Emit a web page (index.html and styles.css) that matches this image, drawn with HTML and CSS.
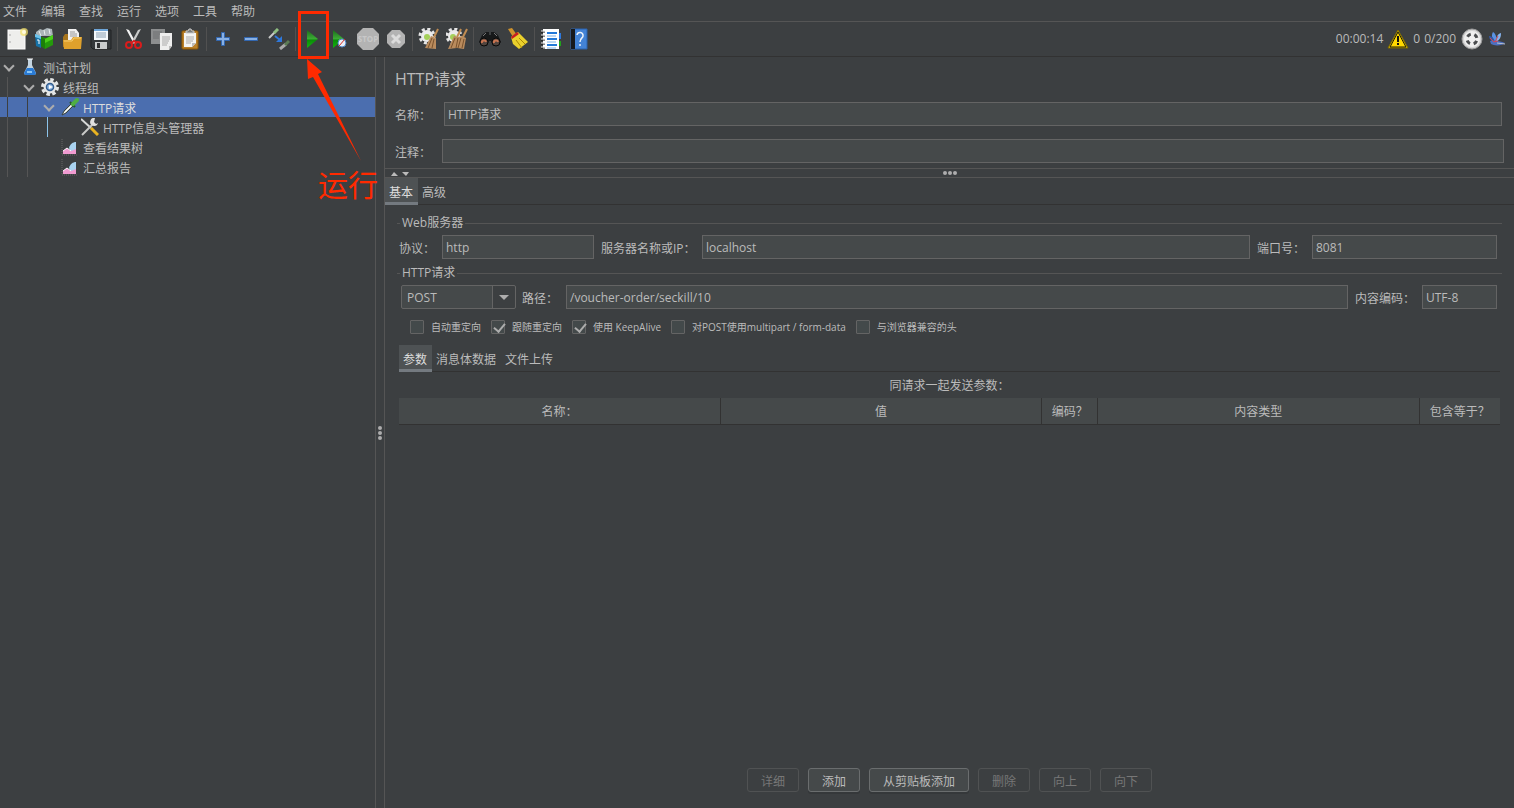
FILE: index.html
```html
<!DOCTYPE html>
<html lang="zh-CN">
<head>
    <meta charset="UTF-8">
    <meta name="viewport" content="width=device-width, initial-scale=1.0">
    <title>Apache JMeter</title>
    <link rel="stylesheet" href="styles.css">
</head>
<body>
    <nav class="menubar">
        <button>文件</button>
        <button>编辑</button>
        <button>查找</button>
        <button>运行</button>
        <button>选项</button>
        <button>工具</button>
        <button>帮助</button>
    </nav>

    <div class="toolbar">
        <button aria-label="新建"><svg width="22" height="22" viewBox="0 0 22 22"><rect x="2" y="2" width="17" height="19" fill="#eeeeec" stroke="#fff"/><path d="M4 6v2M4 13v2" stroke="#aaa" fill="none"/><circle cx="18" cy="4" r="4" fill="#f5e36a" opacity=".7"/><circle cx="18" cy="4" r="2" fill="#fffbe0"/></svg></button>
        <button aria-label="模板"><svg width="22" height="22" viewBox="0 0 22 22"><path d="M2 4l4-3 3 1 4-2 5 1 1 7H2z" fill="#aab4b8"/><path d="M5 3l2 5M10 2l1 5M15 1l1 5" stroke="#e8eeee"/><path d="M1 6l6 3v11l-5-2z" fill="#1672a8"/><path d="M1 6l6 2v3l-6-2z" fill="#6cc3ec"/><path d="M7 9l5 1 7-3v10l-8 4-4-3z" fill="#249a0b"/><path d="M7 9l4 2v10l-4-3z" fill="#1c7f08"/><path d="M11 11l8-4v4l-8 4z" fill="#49cf18"/><path d="M3 12h2v4" stroke="#fff" fill="none"/></svg></button>
        <button aria-label="打开"><svg width="22" height="22" viewBox="0 0 22 22"><path d="M1 9l2-3h5l1 3h9v10H1z" fill="#a6741c"/><path d="M6 1h8l3 4v8H6z" fill="#f1f1f1"/><path d="M8 4h5M8 6h7M8 8h7" stroke="#999"/><path d="M1 12h8l2-3h9l-1 12H2z" fill="#dfa12c"/><path d="M2 13h8l2-3h7" stroke="#f7ce70" fill="none"/></svg></button>
        <button aria-label="保存"><svg width="22" height="22" viewBox="0 0 22 22"><path d="M1 2h20v19H3l-2-2z" fill="#34383b" stroke="#202224"/><rect x="4" y="1" width="14" height="11" fill="#f4f8fb"/><path d="M4 2h14" stroke="#6ea5d8" stroke-width="2"/><path d="M6 5h10M6 7h10M6 9h10" stroke="#8ba0b2"/><rect x="5" y="14" width="12" height="7" fill="#c9cccd"/><rect x="7" y="15" width="3" height="5" fill="#303234"/></svg></button>
        <span class="sep"></span>
        <button aria-label="剪切"><svg width="22" height="22" viewBox="0 0 22 22"><path d="M3 1l3 1 7 13-2 1z" fill="#f3f3f3"/><path d="M18 1l-3 1-7 13 2 1z" fill="#c9caca"/><g fill="none" stroke="#d91c1c" stroke-width="2"><ellipse cx="6" cy="17" rx="3" ry="3"/><ellipse cx="15" cy="17" rx="3" ry="3"/><path d="M8 15l3-2 3 2"/></g></svg></button>
        <button aria-label="复制"><svg width="22" height="22" viewBox="0 0 22 22"><path d="M0 1h14v15H0z" fill="#8c8e8f"/><path d="M2 4h9M2 6h9M2 8h6M2 10h6" stroke="#6c6e70"/><path d="M9 5h12v13l-3 4H9z" fill="#eee"/><path d="M11 9h8M11 11h8M11 13h7M11 15h6M11 17h5" stroke="#aaa"/><path d="M18 22v-4h3" fill="#bbb"/></svg></button>
        <button aria-label="粘贴"><svg width="22" height="22" viewBox="0 0 22 22"><rect x="3" y="3" width="16" height="18" rx="1" fill="#b9802a" stroke="#8f5902"/><path d="M5 5h12v10l-4 4H5z" fill="#f4f4f2"/><path d="M7 9h8M7 11h8M7 13h7M7 15h5" stroke="#aaa"/><path d="M13 19v-4h4z" fill="#bbb"/><path d="M7 5V3h2l1-2h2l1 2h2v2z" fill="#7b7d7b" stroke="#ccc"/></svg></button>
        <span class="sep"></span>
        <button aria-label="展开全部"><svg width="22" height="22" viewBox="0 0 22 22"><path d="M9.500 4.500h3v5h5v3h-5v5h-3v-5h-5v-3h5z" fill="#88b0e4" stroke="#3267b0"/></svg></button>
        <button aria-label="折叠全部"><svg width="22" height="22" viewBox="0 0 22 22"><path d="M4.500 9.500h13v3h-13z" fill="#88b0e4" stroke="#3267b0"/></svg></button>
        <button aria-label="切换"><svg width="22" height="22" viewBox="0 0 22 22"><path d="M1 10l6-6" stroke="#c8cac8" stroke-width="2"/><path d="M6 5l4-4" stroke="#8fbf80" stroke-width="3"/><path d="M7 8l5 4" stroke="#2e78db" stroke-width="2"/><path d="M14 8v6H8z" fill="#2e78db"/><path d="M12 21l6-5" stroke="#aaa" stroke-width="3"/><path d="M17 17l4-4" stroke="#5c7b54" stroke-width="3"/></svg></button>
        <span class="sep"></span>
        <button aria-label="启动"><svg width="22" height="22" viewBox="0 0 22 22"><defs><linearGradient id="play" x1="0" y1="0" x2="0" y2="1"><stop offset="0" stop-color="#1c6c1b"/><stop offset=".5" stop-color="#3cad35"/><stop offset=".55" stop-color="#0a8c08"/><stop offset="1" stop-color="#14b50f"/></linearGradient></defs><path d="M6 2l11 9-11 9z" fill="url(#play)"/></svg></button>
        <button aria-label="不停顿开始"><svg width="22" height="22" viewBox="0 0 22 22"><path d="M4 2l11 9-11 9z" fill="url(#play)"/><circle cx="13" cy="15" r="4" fill="#e8eff8" stroke="#4c82c2"/><path d="M10 18l6-7" stroke="#d92b20"/></svg></button>
        <button aria-label="停止" disabled><svg width="22" height="22" viewBox="0 0 22 22"><path d="M6 0h10l6 6v10l-6 6H6l-6-6V6z" fill="#b3b3b3"/><text class="stop-text" x="11" y="14" text-anchor="middle">STOP</text></svg></button>
        <button aria-label="关闭" disabled><svg width="22" height="22" viewBox="0 0 22 22"><path d="M7 2h8l5 5v8l-5 5H7l-5-5V7z" fill="#b3b3b3"/><path d="M7 7l8 8M15 7l-8 8" stroke="#dcdcdc" stroke-width="3"/></svg></button>
        <span class="sep"></span>
        <button aria-label="清除"><svg width="22" height="22" viewBox="0 0 22 22"><circle cx="9" cy="8" r="7" fill="none" stroke="#e6e6e6" stroke-width="3" stroke-dasharray="3 2.500"/><circle cx="9" cy="8" r="6" fill="#ececec"/><circle cx="9" cy="9" r="3" fill="#a5d05a"/><path d="M20 1l-4 8" stroke="#c18c52" stroke-width="2"/><path d="M13 8l5 2v11l-11-1z" fill="#b98b5d"/><path d="M14 10l-4 10M16 11l-2 9" stroke="#79522d"/></svg></button>
        <button aria-label="清除全部"><svg width="22" height="22" viewBox="0 0 22 22"><circle cx="8" cy="8" r="7" fill="none" stroke="#e6e6e6" stroke-width="3" stroke-dasharray="3 2.500"/><circle cx="8" cy="8" r="6" fill="#ececec"/><circle cx="7" cy="9" r="3" fill="#a5d05a"/><path d="M15 1l-4 8M21 1l-4 8" stroke="#c18c52" stroke-width="2"/><path d="M8 8l4 1 4-1 4 2-2 11-7-1-9 1z" fill="#b98b5d"/><path d="M9 10L5 20M12 10l-2 10M15 10l-3 10M18 11l-2 9" stroke="#79522d"/></svg></button>
        <span class="sep"></span>
        <button aria-label="查找"><svg width="22" height="22" viewBox="0 0 22 22"><path d="M3 7l4-3h3v3h2V4h3l4 3 3 7-4 4h-4l-2-5h-2l-2 5H4l-4-4z" fill="#17191a"/><circle cx="5" cy="14" r="4" fill="#51443e" stroke="#090909"/><circle cx="17" cy="14" r="4" fill="#51443e" stroke="#090909"/><path d="M3 15a2 2 0 014-1M15 15a2 2 0 014-1" stroke="#c97450" stroke-width="2" fill="none"/><path d="M4 8l3-3M15 5l3 3" stroke="#777"/></svg></button>
        <button aria-label="重置搜索"><svg width="22" height="22" viewBox="0 0 22 22"><path d="M1 1l4-1 5 7-4 2z" fill="#cf932d"/><path d="M4 9l7-5 10 10-9 7-6-5z" fill="#ead02c"/><path d="M4 9l6-5 2 2-7 5z" fill="#c71f20"/><path d="M9 12l6 8M12 10l6 6" stroke="#a98605"/></svg></button>
        <span class="sep"></span>
        <button aria-label="函数助手"><svg width="22" height="22" viewBox="0 0 22 22"><rect x="19" y="5" width="2" height="6" fill="#2e78db"/><rect x="19" y="13" width="2" height="5" fill="#20a31c"/><rect x="3" y="1" width="16" height="20" fill="#fff"/><path d="M7 5h10M7 11h10M7 17h10" stroke="#2479d8" stroke-width="2"/><path d="M7 8h9M7 14h9M7 20h9" stroke="#7cb0e9"/><path d="M1 4h4M1 8h4M1 12h4M1 16h4M1 20h4" stroke="#111"/><path d="M1 3h4M1 7h4M1 11h4M1 15h4M1 19h4" stroke="#eee"/></svg></button>
        <button aria-label="帮助"><svg width="22" height="22" viewBox="0 0 22 22"><path d="M3 1h16v20H3z" fill="#4383d6" stroke="#2a63ae"/><path d="M3 1h4v20H3z" fill="#17191c"/><path d="M9 7a3 3 0 116 1c0 2-3 2-3 6M12 16v2" fill="none" stroke="#eaf2fb" stroke-width="1.500"/></svg></button>
        <div class="status">
            <span>00:00:14</span>
            <button aria-label="警告"><svg width="22" height="22" viewBox="0 0 22 22"><path d="M11 2l10 18H1z" fill="#ffd800" stroke="#7d6900" stroke-linejoin="round"/><path d="M11 4l8 15H3z" fill="none" stroke="#19180b"/><path d="M11 8v6M11 15v2" stroke="#111" stroke-width="2"/></svg></button>
            <span>0</span>
            <span class="threads">0/200</span>
            <svg width="22" height="22" viewBox="0 0 22 22"><circle cx="11" cy="11" r="10" fill="#d5d5d5" stroke="#9a9a9a"/><circle cx="11" cy="11" r="8" fill="#f0f0f0"/><circle cx="11" cy="11" r="5" fill="none" stroke="#4b4d4f" stroke-width="3" stroke-dasharray="4 3.850" stroke-dashoffset="-1.930"/></svg>
            <svg class="feather" width="18" height="18" viewBox="0 0 18 18"><path d="M7 12C4 9 3 5 5 2c3 2 4 6 3 10z" fill="#5b93e4"/><path d="M8 12c0-4 1-8 5-9 0 4-1 7-5 9z" fill="#86b4ee"/><path d="M7 12C4 12 1 9 1 6c3 0 5 2 6 6z" fill="#3259a8"/><path d="M2 11c4-1 10 0 15 2-3 3-11 3-14 1z" fill="#4c6fc0"/><path d="M9 13l8 1" stroke="#b8c0cc"/><path d="M2 8l4 4 4-1M10 6l-3 6" stroke="#d54552" fill="none"/></svg>
        </div>
    </div>

    <div class="workspace">
        <aside class="tree">
            <ul>
                <li class="node">
                    <span class="twisty open"></span>
                    <span class="icon"><svg width="18" height="18" viewBox="0 0 18 18"><path d="M7 1h4v6l4 8-1 2H4l-1-2 4-8z" fill="#c4d4e0"/><path d="M6 10h6l3 5-1 2H4l-1-2z" fill="#2a7bd5"/><path d="M6 1h6" stroke="#fff"/><path d="M6 14h5" stroke="#8bc6f5" stroke-width="2"/></svg></span>
                    <span class="name">测试计划</span>
                </li>
                <li class="node">
                    <span class="indent"></span>
                    <span class="twisty open"></span>
                    <span class="icon"><svg width="18" height="18" viewBox="0 0 18 18"><circle cx="9" cy="9" r="7.500" fill="none" stroke="#e4e6e6" stroke-width="3" stroke-dasharray="3.500 2.390"/><circle cx="9" cy="9" r="6.500" fill="#e4e6e6"/><circle cx="9" cy="9" r="3.500" fill="#8fb6e0" stroke="#315c8e" stroke-width="1.500"/><path d="M8 7l4 2-4 2z" fill="#fff"/></svg></span>
                    <span class="name">线程组</span>
                </li>
                <li class="node selected">
                    <span class="indent"></span>
                    <span class="indent"></span>
                    <span class="twisty open"></span>
                    <span class="icon"><svg width="18" height="18" viewBox="0 0 18 18"><path d="M1 17l2-4 7-7 2 2-7 7z" fill="#c9d1cb" stroke="#394341"/><path d="M3 15l7-7" stroke="#fff"/><path d="M9 4l5 5" stroke="#245c20" stroke-width="2"/><path d="M12 6l4-4" stroke="#4fae43" stroke-width="4" stroke-linecap="round"/></svg></span>
                    <span class="name">HTTP请求</span>
                </li>
                <li class="node">
                    <span class="indent"></span>
                    <span class="indent"></span>
                    <span class="indent active"></span>
                    <span class="twisty"></span>
                    <span class="icon"><svg width="18" height="18" viewBox="0 0 18 18"><path d="M0 1l10 9" stroke="#d7d9d8" stroke-width="2"/><path d="M10 10l7 7" stroke="#e8b321" stroke-width="3"/><path d="M1 17L13 5" stroke="#c9cac8" stroke-width="2"/><path d="M14 0a4 4 0 103 5l-2 1-2-2z" fill="#e1e1df"/></svg></span>
                    <span class="name">HTTP信息头管理器</span>
                </li>
                <li class="node">
                    <span class="indent"></span>
                    <span class="indent"></span>
                    <span class="twisty"></span>
                    <span class="icon"><svg width="18" height="18" viewBox="0 0 18 18"><path d="M1 1v16h15" stroke="#666" stroke-dasharray="1 1" fill="none"/><path d="M8 10c1-4 4-6 7-6v11l-4 1z" fill="#a9d3f0"/><path d="M2 16v-3l4-3 4 3 5-2v5z" fill="#f09bd1"/><path d="M2 13l4-3 4 3" stroke="#fff" fill="none"/></svg></span>
                    <span class="name">查看结果树</span>
                </li>
                <li class="node">
                    <span class="indent"></span>
                    <span class="indent"></span>
                    <span class="twisty"></span>
                    <span class="icon"><svg width="18" height="18" viewBox="0 0 18 18"><path d="M1 1v16h15" stroke="#666" stroke-dasharray="1 1" fill="none"/><path d="M8 10c1-4 4-6 7-6v11l-4 1z" fill="#a9d3f0"/><path d="M2 16v-3l4-3 4 3 5-2v5z" fill="#f09bd1"/><path d="M2 13l4-3 4 3" stroke="#fff" fill="none"/></svg></span>
                    <span class="name">汇总报告</span>
                </li>
            </ul>
        </aside>

        <div class="splitter"><i></i><i></i><i></i></div>

        <main class="panel">
            <section class="head">
                <h1>HTTP请求</h1>
                <div class="field">
                    <label for="name">名称：</label>
                    <input type="text" id="name" value="HTTP请求">
                </div>
                <div class="field comment">
                    <label for="comment">注释：</label>
                    <input type="text" id="comment">
                </div>
            </section>

            <div class="hsplitter">
                <span class="arrows"><svg width="20" height="6" viewBox="0 0 20 6"><path d="M1 5l3-4 4 4z" fill="#bbb"/><path d="M12 1h7l-3 4z" fill="#bbb"/></svg></span>
                <i></i><i></i><i></i>
            </div>

            <div class="tabs">
                <button class="tab current">基本</button>
                <button class="tab">高级</button>
            </div>

            <section class="basic">
                <fieldset>
                    <legend>Web服务器</legend>
                    <div class="row">
                        <label class="w-protocol" for="protocol">协议：</label>
                        <input class="i-protocol" type="text" id="protocol" value="http">
                        <label class="w-server" for="server">服务器名称或IP：</label>
                        <input class="grow" type="text" id="server" value="localhost">
                        <label class="w-port" for="port">端口号：</label>
                        <input class="i-port" type="text" id="port" value="8081">
                    </div>
                </fieldset>

                <fieldset>
                    <legend>HTTP请求</legend>
                    <div class="row request">
                        <div class="combo">
                            <select id="method" aria-label="方法">
                                <option>POST</option>
                                <option>GET</option>
                            </select>
                        </div>
                        <label class="w-path" for="path">路径：</label>
                        <input class="grow" type="text" id="path" value="/voucher-order/seckill/10">
                        <label class="w-encoding" for="encoding">内容编码：</label>
                        <input class="i-encoding" type="text" id="encoding" value="UTF-8">
                    </div>
                    <div class="checks">
                        <label><input type="checkbox">自动重定向</label>
                        <label><input type="checkbox" checked>跟随重定向</label>
                        <label><input type="checkbox" checked>使用 KeepAlive</label>
                        <label><input type="checkbox">对POST使用multipart / form-data</label>
                        <label><input type="checkbox">与浏览器兼容的头</label>
                    </div>
                </fieldset>

                <div class="tabs inner">
                    <button class="tab current">参数</button>
                    <button class="tab">消息体数据</button>
                    <button class="tab">文件上传</button>
                </div>

                <table class="params">
                    <caption>同请求一起发送参数：</caption>
                    <thead>
                        <tr>
                            <th>名称：</th>
                            <th>值</th>
                            <th class="c-encode">编码？</th>
                            <th>内容类型</th>
                            <th class="c-equals">包含等于？</th>
                        </tr>
                    </thead>
                </table>

                <div class="actions">
                    <button disabled>详细</button>
                    <button>添加</button>
                    <button>从剪贴板添加</button>
                    <button disabled>删除</button>
                    <button disabled>向上</button>
                    <button disabled>向下</button>
                </div>
            </section>
        </main>
    </div>

    <!-- callout over the run button -->
    <div class="mark-box"></div>
    <svg class="mark-arrow" width="60" height="104" viewBox="0 0 60 104"><path d="M4 0l15 13-4 2 43 87L10 18l-5 2z" fill="#ff2a00"/></svg>
    <div class="mark-text">运行</div>
</body>
</html>
```
FILE: styles.css
```css
* {
    box-sizing: border-box;
}

body {
    margin: 0;
    height: 100vh;
    display: flex;
    flex-direction: column;
    overflow: hidden;
    background: #3c3f41;
    color: #bbb;
    font-family: "Open Sans", "Noto Sans CJK SC", sans-serif;
    font-size: 12px;
    line-height: 18px;
}

button, input, select {
    font: inherit;
    color: inherit;
}

button {
    padding: 0;
    border: none;
    background: none;
    white-space: nowrap;
}

svg {
    display: block;
}

.menubar {
    display: flex;
    gap: 14px;
    height: 22px;
    padding: 2px 3px 0;
    border-bottom: 1px solid #555;
}

/* toolbar */
.toolbar {
    display: flex;
    align-items: center;
    height: 35px;
    padding: 0 8px 0 3px;
    border-bottom: 1px solid #323232;
}

.toolbar > button {
    width: 28px;
    height: 28px;
    padding: 3px;
}

.stop-text {
    font-size: 8px;
    font-weight: bold;
    fill: #c8c8c8;
}

.sep {
    width: 1px;
    height: 24px;
    margin: 0 2px;
    background: #515151;
}

.status {
    display: flex;
    align-items: center;
    margin-left: auto;
}

.status button {
    margin: 0 4px;
}

.threads {
    margin: 0 5px 0 4px;
}

.feather {
    margin-left: 5px;
}

/* main split */
.workspace {
    flex: 1;
    display: flex;
    min-height: 0;
}

.tree {
    width: 376px;
    border-right: 1px solid #555;
}

.tree ul {
    margin: 0;
    padding: 0;
    list-style: none;
}

.node {
    display: flex;
    height: 20px;
    align-items: center;
}

.node.selected {
    background: #4b6eaf;
}

.indent, .twisty, .icon {
    width: 20px;
    height: 20px;
    flex: none;
}

.indent {
    padding-left: 7px;
}

.indent::before {
    content: "";
    display: block;
    width: 1px;
    height: 20px;
    background: #555;
}

.selected .indent::before {
    background: #3c3f41;
}

.indent.active::before {
    background: #8cc4ea;
}

.twisty {
    padding: 5px 0 0 5px;
}

.twisty.open::before {
    content: "";
    display: block;
    width: 6px;
    height: 6px;
    border: solid #adadad;
    border-width: 0 2px 2px 0;
    transform: rotate(45deg);
}

.icon {
    padding: 1px;
}

.name {
    padding: 3px 0 0 3px;
}

.selected .name {
    color: #ddd;
}

.splitter {
    width: 9px;
    display: flex;
    flex-direction: column;
    align-items: center;
    justify-content: center;
    gap: 1px;
    border-right: 1px solid #555;
}

.splitter i, .hsplitter i {
    width: 4px;
    height: 4px;
    border-radius: 2px;
    background: #adadad;
}

.panel {
    flex: 1;
    min-width: 0;
    display: flex;
    flex-direction: column;
}

/* name and comment */
.head {
    padding: 10px 10px 5px;
}

h1 {
    margin: 0 0 11px;
    font-size: 16px;
    font-weight: normal;
    line-height: 24px;
}

.field {
    display: flex;
    align-items: center;
    padding-right: 2px;
    margin-bottom: 13px;
}

.field label {
    width: 49px;
    padding-top: 3px;
}

.field input {
    flex: 1;
}

.field.comment {
    padding: 0;
    margin: 0;
}

.comment label {
    width: 47px;
}

input[type="text"] {
    height: 24px;
    min-width: 0;
    padding: 0 3px;
    border: 1px solid #646464;
    background: #45494a;
    outline: none;
}

.hsplitter {
    display: flex;
    align-items: center;
    justify-content: center;
    gap: 1px;
    position: relative;
    height: 10px;
    border: solid #555;
    border-width: 1px 0;
}

.arrows {
    position: absolute;
    left: 5px;
    top: 2px;
}

/* tabs */
.tabs {
    display: flex;
    height: 27px;
    border-bottom: 1px solid #323232;
}

.tab {
    height: 27px;
    padding: 2px 5px 0 4px;
}

.tab.current {
    padding-top: 5px;
    border-bottom: 3px solid #747a80;
    background: #4e5254;
    color: #ddd;
}

.basic {
    flex: 1;
    display: flex;
    flex-direction: column;
    padding: 9px 14px 16px;
}

fieldset {
    margin: 0 -2px;
    padding: 2px 0 0;
    border: none;
    min-width: 0;
}

legend {
    display: flex;
    align-items: center;
    gap: 2px;
    width: 100%;
    padding: 0 0 1px;
}

legend::before, legend::after {
    content: "";
    width: 3px;
    height: 1px;
    background: #555;
}

legend::after {
    flex: 1;
}

.row {
    display: flex;
    align-items: center;
    height: 24px;
    margin-bottom: 5px;
    padding: 0 5px 0 2px;
}

.row label {
    flex: none;
    padding-top: 3px;
    white-space: nowrap;
}

.row .grow {
    flex: 1;
}

.w-protocol { width: 43px; }
.i-protocol { width: 152px; }
.w-server { width: 108px; padding-left: 7px; }
.w-port { width: 62px; padding-left: 7px; }
.i-port { width: 185px; }
.w-path { width: 50px; padding-left: 6px; }
.w-encoding { width: 74px; padding-left: 7px; }
.i-encoding { width: 75px; }

.request {
    padding-left: 4px;
}

.combo {
    position: relative;
    width: 115px;
}

.combo select {
    display: block;
    width: 100%;
    height: 24px;
    padding: 2px 5px 0;
    border: 1px solid #646464;
    border-radius: 2px;
    background: linear-gradient(to right, #45494a 90px, #646464 90px, #646464 91px, #3c3f41 91px);
    appearance: none;
}

/* drop-down arrow */
.combo::after {
    content: "";
    position: absolute;
    right: 7px;
    top: 10px;
    border: solid transparent;
    border-width: 5px 5px 0;
    border-top-color: #adadad;
    pointer-events: none;
}

.checks {
    display: flex;
    gap: 10px;
    padding: 1px 0 0 13px;
    height: 25px;
    font-size: 10px;
}

.checks label {
    display: flex;
    align-items: center;
    white-space: nowrap;
}

.checks input {
    appearance: none;
    width: 14px;
    height: 14px;
    margin: 0 7px 0 0;
    border: 1px solid #646464;
    border-radius: 1px;
    background: #43494a;
}

.checks input:checked::after {
    content: "";
    display: block;
    width: 5px;
    height: 9px;
    margin: 0 0 0 4px;
    border: solid #adadad;
    border-width: 0 2px 2px 0;
    transform: rotate(40deg);
}

.inner {
    flex: none;
    margin-top: 6px;
}

/* parameters */
.params {
    width: 100%;
    border-collapse: collapse;
    table-layout: fixed;
}

.params caption {
    height: 26px;
    padding-top: 2px;
    line-height: 24px;
}

.params th {
    height: 26px;
    padding: 3px 0 0;
    border-right: 1px solid #323232;
    border-bottom: 1px solid #323232;
    background: #45494a;
    font-weight: normal;
}

.params th:last-child {
    border-right: none;
}

.c-encode { width: 56px; }
.c-equals { width: 81px; }

.actions {
    display: flex;
    justify-content: center;
    gap: 9px;
    margin-top: auto;
}

.actions button {
    height: 24px;
    padding: 3px 13px 0;
    border: 1px solid #6a6d6e;
    border-radius: 3px;
    background: #45494a;
    box-shadow: 0 2px 0 #35383a;
}

.actions button:disabled {
    border-color: #505253;
    background: none;
    box-shadow: none;
    color: #777;
}

/* callout */
.mark-box {
    position: absolute;
    left: 298px;
    top: 11px;
    width: 31px;
    height: 48px;
    border: 3px solid #ff2a00;
}

.mark-arrow {
    position: absolute;
    left: 303px;
    top: 59px;
}

.mark-text {
    position: absolute;
    left: 318px;
    top: 163px;
    color: #ff2a00;
    font-size: 30px;
    line-height: 44px;
}
```
